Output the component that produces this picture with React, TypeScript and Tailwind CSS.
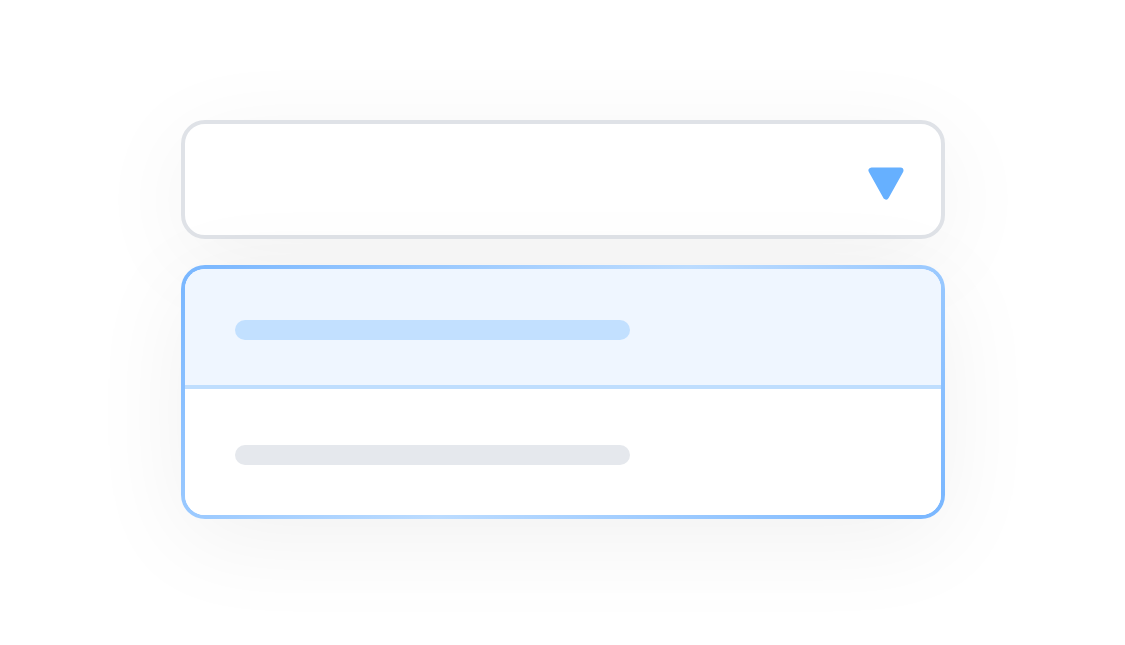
import React from 'react';

function Caret() {
  return (
    <svg width="38" height="35" viewBox="0 0 38 35" className="block">
      <polygon
        points="4.5,4.5 33.5,4.5 19,30.5"
        fill="#66b0ff"
        stroke="#66b0ff"
        strokeWidth="6"
        strokeLinejoin="round"
      />
    </svg>
  );
}

export default function App() {
  return (
    <div className="min-h-[645px] w-full bg-white flex flex-col items-center pt-[120px] font-['Inter',sans-serif]">
      <div className="w-[764px] flex flex-col gap-[26px]">
        {/* select trigger */}
        <div className="h-[119px] rounded-[24px] border-4 border-[#dfe2e7] bg-white flex items-center justify-end pr-[36px] pt-[7px] shadow-[0_20px_100px_rgba(0,0,0,0.05)]">
          <Caret />
        </div>

        {/* open list */}
        <div className="rounded-[24px] p-[4px] bg-[linear-gradient(135deg,#78b6ff_0%,#bcdcff_50%,#78b6ff_100%)] shadow-[0_20px_100px_rgba(0,0,0,0.06)]">
          <div className="rounded-[20px] overflow-hidden bg-white flex flex-col h-[246px]">
            <div className="h-[116px] bg-[#eff6ff] pl-[50px] pt-[51px]">
              <div className="h-[20px] w-[395px] rounded-full bg-[#c2e0ff]" />
            </div>
            <div className="h-[4px] bg-[#bfdefe]" />
            <div className="flex-1 bg-white pl-[50px] pt-[56px]">
              <div className="h-[20px] w-[395px] rounded-full bg-[#e5e8ed]" />
            </div>
          </div>
        </div>
      </div>
    </div>
  );
}
